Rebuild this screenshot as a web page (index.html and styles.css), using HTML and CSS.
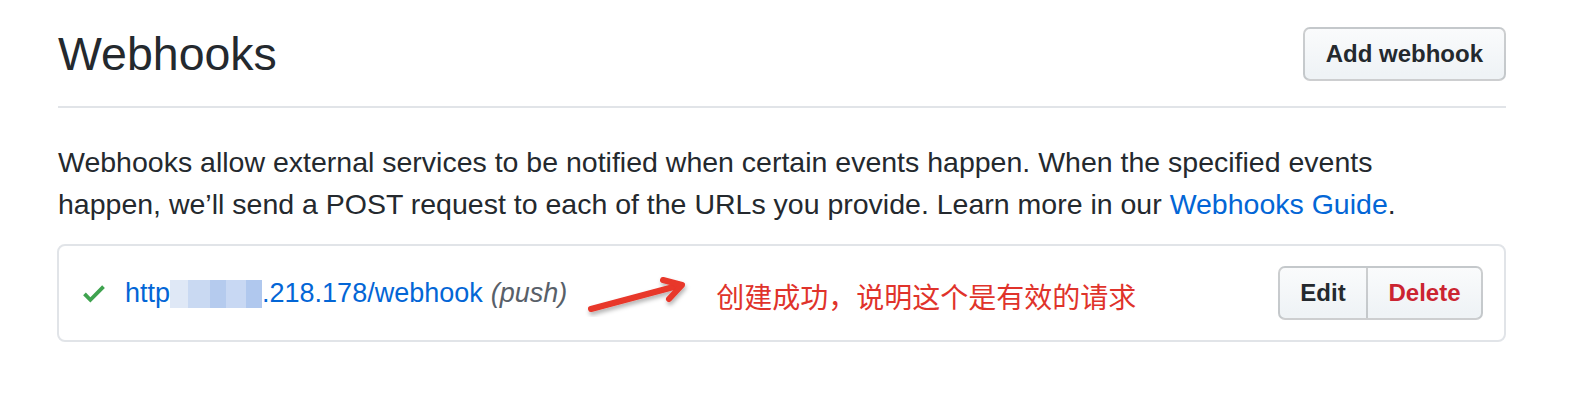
FILE: index.html
```html
<!DOCTYPE html>
<html lang="zh">
<head>
<meta charset="utf-8">
<title>Webhooks</title>
<link rel="stylesheet" href="styles.css">
</head>
<body>
<div class="page">
  <div class="head">
    <h2 class="title">Webhooks</h2>
    <button class="btn">Add webhook</button>
  </div>
  <p class="intro">Webhooks allow external services to be notified when certain events happen. When the specified events happen, we’ll send a POST request to each of the URLs you provide. Learn more in our <a href="#" class="link">Webhooks Guide</a>.</p>
  <div class="box">
    <div class="hook">
      <svg class="check" viewBox="0 0 12 16" width="22" height="29"><path fill="#3fa34f" fill-rule="evenodd" d="M12 5l-8 8-4-4 1.5-1.5L4 10l6.5-6.5L12 5z"/></svg>
      <a href="#" class="url">http<span class="blur"><i class="b1"></i><i class="b2"></i><i class="b3"></i><i class="b4"></i><i class="b5"></i></span>.218.178/webhook</a>
      <span class="evt">(push)</span>
      <div class="note">
        <svg class="arrow" viewBox="0 0 110 44" width="110" height="44">
          <defs><filter id="sh" x="-20%" y="-40%" width="140%" height="180%"><feDropShadow dx="1" dy="3" stdDeviation="2" flood-color="#000" flood-opacity="0.3"/></filter></defs>
          <g filter="url(#sh)" stroke="#e8372c" stroke-width="6" stroke-linecap="round" stroke-linejoin="round" fill="none">
            <path d="M6 36 L96 12"/>
            <path d="M78 7 L97 12 L84 26"/>
          </g>
        </svg>
        <span class="note-text">创建成功，说明这个是有效的请求</span>
      </div>
    </div>
    <div class="group">
      <button class="btn gbtn edit">Edit</button>
      <button class="btn gbtn del">Delete</button>
    </div>
  </div>
</div>
</body>
</html>
```
FILE: styles.css
```css
* { box-sizing: border-box; }
body {
  margin: 0;
  background: #fff;
  font-family: "Liberation Sans", Arial, sans-serif;
  color: #24292e;
}
.page {
  width: 1506px;
  padding-left: 58px;
}
.head {
  display: flex;
  align-items: center;
  justify-content: space-between;
  padding: 27px 0 25px;
  border-bottom: 2px solid #e1e4e8;
}
.title {
  margin: 0;
  font-size: 46.5px;
  font-weight: 400;
  line-height: 54px;
  color: #24292e;
}
.btn {
  font-family: "Liberation Sans", Arial, sans-serif;
  font-weight: 700;
  font-size: 24px;
  color: #24292e;
  background: linear-gradient(#fafbfc, #eff3f6 90%);
  border: 2px solid rgba(27,31,35,.2);
  border-radius: 7px;
  height: 54px;
  padding: 0 21px;
  cursor: pointer;
}
.intro {
  margin: 33px 0 19px;
  max-width: 1400px;
  font-size: 28.5px;
  line-height: 42px;
  color: #24292e;
}
.link { color: #0366d6; text-decoration: none; }
.box {
  display: flex;
  align-items: center;
  justify-content: space-between;
  height: 98px;
  margin-left: -1px;
  border: 2px solid #e1e4e8;
  border-radius: 8px;
  padding: 0 21px 0 24px;
}
.hook {
  display: flex;
  align-items: center;
  font-size: 27px;
}
.check { margin-right: 20px; margin-top: 0; }
.url {
  color: #0366d6;
  text-decoration: none;
  display: inline-flex;
  align-items: center;
}
.blur {
  display: inline-flex;
  width: 92px;
  height: 28px;
  margin-top: 2px;
}
.blur i { display: block; height: 100%; }
.b1 { width: 18px; background: #dfe8f6; }
.b2 { width: 22px; background: #c9d9f2; }
.b3 { width: 16px; background: #b5cbee; }
.b4 { width: 20px; background: #c8d8f3; }
.b5 { width: 16px; background: #b0c8ee; }
.evt {
  color: #586069;
  font-style: italic;
  margin-left: 8px;
}
.note {
  display: flex;
  align-items: center;
  margin-left: 18px;
}
.arrow { margin-top: 4px; }
.note-text {
  margin-left: 21px;
  font-family: "Noto Sans CJK SC", sans-serif;
  font-size: 28px;
  color: #e0332b;
  line-height: 1;
  margin-top: 6px;
}
.group { display: flex; }
.gbtn { padding: 0 0; }
.edit {
  width: 90px;
  border-radius: 7px 0 0 7px;
}
.del {
  width: 117px;
  margin-left: -2px;
  border-radius: 0 7px 7px 0;
  color: #cb2431;
}
```
